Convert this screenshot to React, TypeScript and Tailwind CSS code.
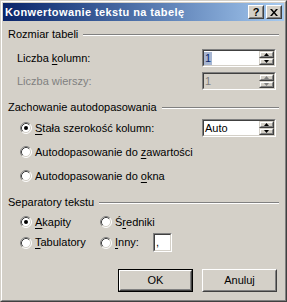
import React from "react";

function Radio({ checked }: { checked?: boolean }) {
  return (
    <svg width="12" height="12" viewBox="0 0 12 12" className="shrink-0">
      <circle cx="6" cy="6" r="5" fill="#fff" />
      <path d="M2.11 9.89 A5.5 5.5 0 0 1 9.89 2.11" stroke="#808080" fill="none" />
      <path d="M9.89 2.11 A5.5 5.5 0 0 1 2.11 9.89" stroke="#fff" fill="none" />
      <path d="M2.82 9.18 A4.5 4.5 0 0 1 9.18 2.82" stroke="#404040" fill="none" />
      <path d="M9.18 2.82 A4.5 4.5 0 0 1 2.82 9.18" stroke="#d4d0c8" fill="none" />
      {checked ? <circle cx="6" cy="6" r="2" fill="#000" /> : null}
    </svg>
  );
}

function SpinButton({ up, disabled }: { up?: boolean; disabled?: boolean }) {
  const fill = disabled ? "#808080" : "#000";
  return (
    <div className="flex h-[7px] items-center justify-center border border-t-[#d4d0c8] border-l-[#d4d0c8] border-r-[#404040] border-b-[#404040] bg-[#d4d0c8]">
      <div className="flex h-full w-full items-center justify-center border border-t-white border-l-white border-r-[#808080] border-b-[#808080]">
        <svg width="5" height="3" viewBox="0 0 5 3">
          {up ? <path d="M2.5 0 L5 3 L0 3 Z" fill={fill} /> : <path d="M0 0 L5 0 L2.5 3 Z" fill={fill} />}
        </svg>
      </div>
    </div>
  );
}

function Spinner({ value, disabled, selected }: { value: string; disabled?: boolean; selected?: boolean }) {
  return (
    <div className="ml-auto flex h-[18px] w-[74px] border border-t-[#808080] border-l-[#808080] border-r-white border-b-white">
      <div
        className={
          "flex flex-1 border border-t-[#404040] border-l-[#404040] border-r-[#d4d0c8] border-b-[#d4d0c8] " +
          (disabled ? "bg-[#d4d0c8]" : "bg-white")
        }
      >
        <div className="flex flex-1 items-center">
          {selected ? (
            <span className="bg-[#a7b6d2] px-px leading-[13px] text-[#0a246a]">{value}</span>
          ) : (
            <span className={"pl-px " + (disabled ? "text-[#808080]" : "text-black")}>{value}</span>
          )}
        </div>
        <div className="flex w-[15px] flex-col">
          <SpinButton up disabled={disabled} />
          <SpinButton disabled={disabled} />
        </div>
      </div>
    </div>
  );
}

function GroupTitle({ title, className }: { title: string; className: string }) {
  return (
    <div className={"ml-[5px] mr-[5px] flex h-[13px] items-center " + className}>
      <span>{title}</span>
      <div className="ml-[5px] h-[2px] flex-1 border-t border-b border-t-[#808080] border-b-white" />
    </div>
  );
}

function Option({ checked, children }: { checked?: boolean; children: React.ReactNode }) {
  return (
    <div className="flex items-center gap-[3px]">
      <Radio checked={checked} />
      <span>{children}</span>
    </div>
  );
}

function PushButton({ label, isDefault }: { label: string; isDefault?: boolean }) {
  const inner = (
    <div className="flex h-full w-full items-center justify-center border border-t-white border-l-white border-r-[#404040] border-b-[#404040]">
      <div className="flex h-full w-full items-center justify-center border border-t-[#d4d0c8] border-l-[#d4d0c8] border-r-[#808080] border-b-[#808080]">
        {label}
      </div>
    </div>
  );
  if (isDefault) {
    return <div className="h-[23px] w-[75px] border border-black">{inner}</div>;
  }
  return <div className="h-[23px] w-[75px]">{inner}</div>;
}

export default function App() {
  return (
    <div className="h-[302px] w-[287px] border border-t-[#d4d0c8] border-l-[#d4d0c8] border-r-[#404040] border-b-[#404040] font-['Liberation_Sans',Arial,sans-serif] text-[11px] text-black">
      <div className="flex h-full flex-col border border-t-white border-l-white border-r-[#808080] border-b-[#808080] bg-[#d4d0c8] p-px">
        <div className="flex h-[18px] items-center bg-linear-to-r from-[#0a246a] to-[#a6caf0] pl-[2px] pr-[2px]">
          <span className="font-bold tracking-[0.4px] text-white">Konwertowanie tekstu na tabelę</span>
          <div className="ml-auto flex gap-[2px]">
            <div className="flex h-[14px] w-[16px] border border-t-white border-l-white border-r-[#404040] border-b-[#404040] bg-[#d4d0c8]">
              <div className="flex flex-1 items-center justify-center border border-t-[#d4d0c8] border-l-[#d4d0c8] border-r-[#808080] border-b-[#808080] text-[11px] font-bold leading-none">
                ?
              </div>
            </div>
            <div className="flex h-[14px] w-[16px] border border-t-white border-l-white border-r-[#404040] border-b-[#404040] bg-[#d4d0c8]">
              <div className="flex flex-1 items-center justify-center border border-t-[#d4d0c8] border-l-[#d4d0c8] border-r-[#808080] border-b-[#808080]">
                <svg width="8" height="7" viewBox="0 0 8 7">
                  <path d="M0 0 L2 0 L4 2.5 L6 0 L8 0 L5 3.5 L8 7 L6 7 L4 4.5 L2 7 L0 7 L3 3.5 Z" fill="#000" />
                </svg>
              </div>
            </div>
          </div>
        </div>

        <GroupTitle title="Rozmiar tabeli" className="mt-[7px]" />
        <div className="mt-[8px] ml-[14px] mr-[8px] flex h-[18px] items-center">
          <span>
            Liczba <span className="underline underline-offset-2">k</span>olumn:
          </span>
          <Spinner value="1" selected />
        </div>
        <div className="mt-[5px] ml-[14px] mr-[8px] flex h-[18px] items-center">
          <span className="text-[#808080]">Liczba wierszy:</span>
          <Spinner value="1" disabled />
        </div>

        <GroupTitle title="Zachowanie autodopasowania" className="mt-[11px]" />
        <div className="mt-[5px] ml-[17px] mr-[8px] flex h-[18px] items-center">
          <Option checked>
            <span className="underline underline-offset-2">S</span>tała szerokość kolumn:
          </Option>
          <Spinner value="Auto" />
        </div>
        <div className="mt-[6px] ml-[17px] flex h-[18px] items-center">
          <Option>
            Autodopasowanie do <span className="underline underline-offset-2">z</span>awartości
          </Option>
        </div>
        <div className="mt-[6px] ml-[17px] flex h-[18px] items-center">
          <Option>
            Autodopasowanie do <span className="underline underline-offset-2">o</span>kna
          </Option>
        </div>

        <GroupTitle title="Separatory tekstu" className="mt-[11px]" />
        <div className="mt-[4px] ml-[17px] flex h-[18px] items-center">
          <div className="w-[80px]">
            <Option checked>
              <span className="underline underline-offset-2">A</span>kapity
            </Option>
          </div>
          <Option>
            Ś<span className="underline underline-offset-2">r</span>edniki
          </Option>
        </div>
        <div className="mt-[2px] ml-[17px] flex h-[19px] items-center">
          <div className="w-[80px]">
            <Option>
              <span className="underline underline-offset-2">T</span>abulatory
            </Option>
          </div>
          <div className="flex w-[72px] items-center">
            <Option>
              <span className="underline underline-offset-2">I</span>nny:
            </Option>
            <div className="ml-auto flex h-[19px] w-[19px] border border-t-[#808080] border-l-[#808080] border-r-white border-b-white">
              <div className="flex flex-1 items-end border border-t-[#404040] border-l-[#404040] border-r-[#d4d0c8] border-b-[#d4d0c8] bg-white pb-px pl-px leading-[13px]">
                ,
              </div>
            </div>
          </div>
        </div>

        <div className="mt-[17px] mr-[7px] flex justify-end gap-[9px]">
          <PushButton label="OK" isDefault />
          <PushButton label="Anuluj" />
        </div>
      </div>
    </div>
  );
}
